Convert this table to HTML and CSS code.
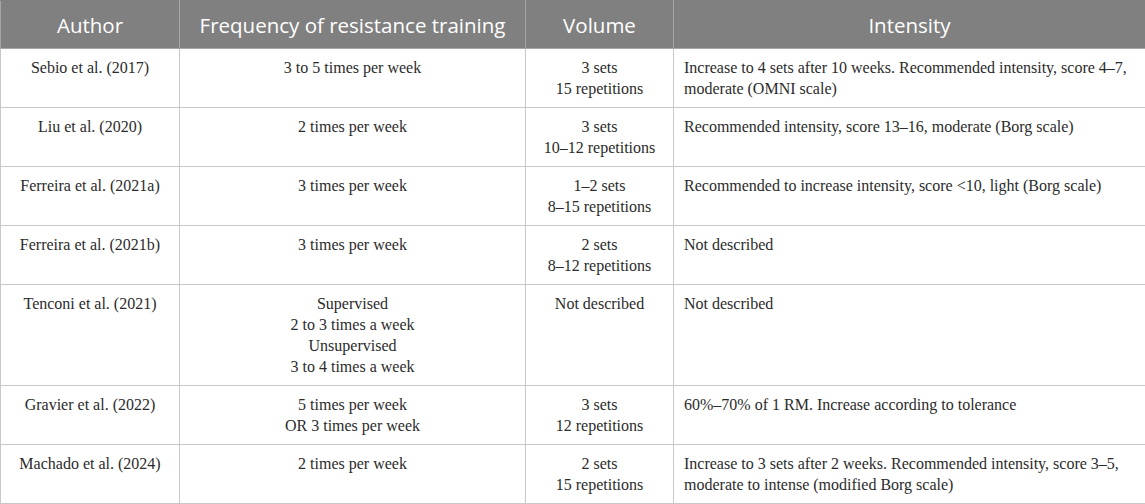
FILE: index.html
```html
<!DOCTYPE html>
<html lang="en">

<head>
	<meta charset="utf-8">
	<title>Resistance training protocols</title>
	<link rel="stylesheet" href="styles.css">
</head>

<body>
	<table class="protocols">
		<colgroup>
			<col class="col-author">
			<col class="col-frequency">
			<col class="col-volume">
			<col class="col-intensity">
		</colgroup>
		<thead>
			<tr>
				<th>Author</th>
				<th>Frequency of resistance training</th>
				<th>Volume</th>
				<th>Intensity</th>
			</tr>
		</thead>
		<tbody>
			<tr>
				<td class="center">Sebio et al. (2017)</td>
				<td class="center">3 to 5 times per week</td>
				<td class="center">3 sets<br>15 repetitions</td>
				<td>Increase to 4 sets after 10 weeks. Recommended intensity, score 4–7, moderate (OMNI scale)</td>
			</tr>
			<tr>
				<td class="center">Liu et al. (2020)</td>
				<td class="center">2 times per week</td>
				<td class="center">3 sets<br>10–12 repetitions</td>
				<td>Recommended intensity, score 13–16, moderate (Borg scale)</td>
			</tr>
			<tr>
				<td class="center">Ferreira et al. (2021a)</td>
				<td class="center">3 times per week</td>
				<td class="center">1–2 sets<br>8–15 repetitions</td>
				<td>Recommended to increase intensity, score &lt;10, light (Borg scale)</td>
			</tr>
			<tr>
				<td class="center">Ferreira et al. (2021b)</td>
				<td class="center">3 times per week</td>
				<td class="center">2 sets<br>8–12 repetitions</td>
				<td>Not described</td>
			</tr>
			<tr class="tall">
				<td class="center">Tenconi et al. (2021)</td>
				<td class="center">Supervised<br>2 to 3 times a week<br>Unsupervised<br>3 to 4 times a week</td>
				<td class="center">Not described</td>
				<td>Not described</td>
			</tr>
			<tr>
				<td class="center">Gravier et al. (2022)</td>
				<td class="center">5 times per week<br>OR 3 times per week</td>
				<td class="center">3 sets<br>12 repetitions</td>
				<td>60%–70% of 1 RM. Increase according to tolerance</td>
			</tr>
			<tr>
				<td class="center">Machado et al. (2024)</td>
				<td class="center">2 times per week</td>
				<td class="center">2 sets<br>15 repetitions</td>
				<td>Increase to 3 sets after 2 weeks. Recommended intensity, score 3–5, moderate to intense (modified Borg scale)</td>
			</tr>
		</tbody>
	</table>
</body>

</html>
```

FILE: styles.css
```css
body {
	background-color: #FFFFFF;
	margin: 0;
}

.protocols {
	border-collapse: collapse;
	color: #2B2B2B;
	font-family: "Liberation Serif", serif;
	font-size: 16px;
	table-layout: fixed;
	width: 1145px;
}

.col-author { width: 179px; }
.col-frequency { width: 346px; }
.col-volume { width: 148px; }
.col-intensity { width: 472px; }

.protocols th {
	background-color: #808080;
	border: 1px solid #A6A6A6;
	border-top-color: #808080;
	color: #FFFFFF;
	font-family: "Open Sans", sans-serif;
	font-size: 20.5px;
	font-weight: normal;
	height: 47px;
	padding: 0 8px;
	text-align: center;
}

.protocols td {
	border: 1px solid #C8C8C8;
	height: 42px;
	line-height: 21px;
	padding: 8px 10px;
	text-align: left;
	vertical-align: top;
}

.protocols td.center {
	text-align: center;
}

.protocols tr.tall td {
	height: auto;
}
```
